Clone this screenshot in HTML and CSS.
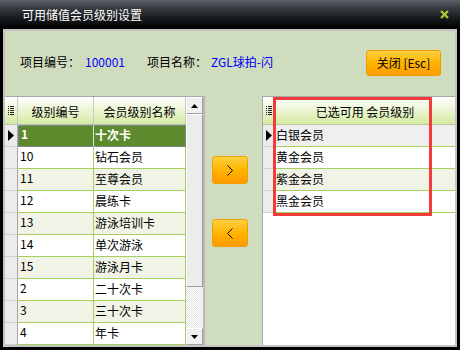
FILE: index.html
```html
<!DOCTYPE html>
<html>
<head>
<meta charset="utf-8">
<link rel="stylesheet" href="styles.css">
</head>
<body>
<div class="window">
  <div class="titlebar">
    <span class="title">可用储值会员级别设置</span>
    <svg class="close" width="9" height="9" viewBox="0 0 9 9"><path d="M1 1L8 8M8 1L1 8" stroke="#a6d02e" stroke-width="2.2"/></svg>
  </div>
  <div class="frame">
    <div class="info">
      <span class="lbl">项目编号：</span><span class="val">100001</span>
      <span class="lbl lbl2">项目名称：</span><span class="val">ZGL球拍-闪</span>
      <button class="btn-close">关闭 [Esc]</button>
    </div>
    <div class="main">
      <div class="lpanel">
        <div class="ltable">
          <div class="hrow">
            <div class="ind hind"><svg width="6" height="9" viewBox="0 0 6 9"><path d="M0 .5h1M2 .5h4M0 2.5h1M2 2.5h4M0 4.5h1M2 4.5h4M0 6.5h1M2 6.5h4M0 8.5h1M2 8.5h4" stroke="#222" stroke-width="1"/></svg></div>
            <div class="hc c1">级别编号</div>
            <div class="hc c2">会员级别名称</div>
          </div>
          <div class="row sel">
            <div class="ind"><svg width="6" height="11" viewBox="0 0 6 11"><path d="M0 0L6 5.5L0 11Z" fill="#000"/></svg></div>
            <div class="cell c1 num">1</div>
            <div class="cell c2">十次卡</div>
          </div>
          <div class="row"><div class="ind"></div><div class="cell c1 num">10</div><div class="cell c2">钻石会员</div></div>
          <div class="row alt"><div class="ind"></div><div class="cell c1 num">11</div><div class="cell c2">至尊会员</div></div>
          <div class="row"><div class="ind"></div><div class="cell c1 num">12</div><div class="cell c2">晨练卡</div></div>
          <div class="row alt"><div class="ind"></div><div class="cell c1 num">13</div><div class="cell c2">游泳培训卡</div></div>
          <div class="row"><div class="ind"></div><div class="cell c1 num">14</div><div class="cell c2">单次游泳</div></div>
          <div class="row alt"><div class="ind"></div><div class="cell c1 num">15</div><div class="cell c2">游泳月卡</div></div>
          <div class="row"><div class="ind"></div><div class="cell c1 num">2</div><div class="cell c2">二十次卡</div></div>
          <div class="row alt"><div class="ind"></div><div class="cell c1 num">3</div><div class="cell c2">三十次卡</div></div>
          <div class="row"><div class="ind"></div><div class="cell c1 num">4</div><div class="cell c2">年卡</div></div>
        </div>
        <div class="vscroll">
          <div class="sbtn"><svg width="7" height="4" viewBox="0 0 7 4"><path d="M0 4L3.5 0L7 4Z" fill="#000"/></svg></div>
          <div class="thumb"></div>
          <div class="track"></div>
          <div class="sbtn"><svg width="7" height="4" viewBox="0 0 7 4"><path d="M0 0L3.5 4L7 0Z" fill="#000"/></svg></div>
        </div>
      </div>
      <div class="mid">
        <button class="arrow"><svg width="6" height="11" viewBox="0 0 6 11"><path d="M0.5 0.5L5.5 5.5L0.5 10.5" fill="none" stroke="#000" stroke-width="1"/></svg></button>
        <button class="arrow"><svg width="6" height="11" viewBox="0 0 6 11"><path d="M5.5 0.5L0.5 5.5L5.5 10.5" fill="none" stroke="#000" stroke-width="1"/></svg></button>
      </div>
      <div class="rpanel">
        <div class="hrow">
          <div class="ind rind hind"><svg width="6" height="9" viewBox="0 0 6 9"><path d="M0 .5h1M2 .5h4M0 2.5h1M2 2.5h4M0 4.5h1M2 4.5h4M0 6.5h1M2 6.5h4M0 8.5h1M2 8.5h4" stroke="#222" stroke-width="1"/></svg></div>
          <div class="hc rc">已选可用 会员级别</div>
        </div>
        <div class="row rsel"><div class="ind rind"><svg width="6" height="11" viewBox="0 0 6 11"><path d="M0 0L6 5.5L0 11Z" fill="#000"/></svg></div><div class="cell rc">白银会员</div></div>
        <div class="row"><div class="ind rind"></div><div class="cell rc">黄金会员</div></div>
        <div class="row alt"><div class="ind rind"></div><div class="cell rc">紫金会员</div></div>
        <div class="row"><div class="ind rind"></div><div class="cell rc">黑金会员</div></div>
        <div class="mark"></div>
      </div>
    </div>
  </div>
</div>
</body>
</html>
```

FILE: styles.css
```css
* { box-sizing: border-box; }
html, body {
  margin: 0;
  padding: 0;
  background: #000;
}
body {
  width: 460px;
  height: 350px;
  overflow: hidden;
  font-family: "Noto Sans CJK SC", "Liberation Sans", sans-serif;
  font-size: 12px;
  color: #000;
}
.window {
  width: 460px;
  height: 350px;
  display: flex;
  flex-direction: column;
  background: #000;
  padding-bottom: 5px;
}
.titlebar {
  height: 29px;
  flex: none;
  display: flex;
  align-items: center;
  justify-content: space-between;
  padding: 0 11px 0 22px;
  background: linear-gradient(to bottom, #5a6068 0%, #3a4046 25%, #15181b 65%, #000 100%);
  color: #fff;
  line-height: 14px;
}
.title { font-size: 12px; letter-spacing: 0; }
.close { display: block; margin-top: -1px; }
.frame {
  flex: 1;
  margin: 0 3px;
  border: 2px solid #c4c4c4;
  background: #d0dcbe;
  display: flex;
  flex-direction: column;
}
.info {
  height: 65px;
  flex: none;
  display: flex;
  align-items: center;
  padding: 0 14px 3px 15px;
  line-height: 14px;
}
.lbl { margin-right: 5px; }
.lbl2 { margin-left: 22px; margin-right: 4px; }
.val { color: #0000ff; }
.btn-close {
  margin-left: auto;
  width: 75px;
  height: 26px;
  margin-top: 2px;
  border: 1px solid #f09a00;
  border-radius: 3px;
  background: linear-gradient(to bottom, #ffd040 0%, #ffb400 50%, #ff9c00 100%);
  font-family: "Noto Sans CJK SC", sans-serif;
  font-size: 12px;
  line-height: 14px;
  padding: 0;
  color: #000;
}
.main {
  flex: 1;
  display: flex;
  min-height: 0;
}
.lpanel {
  width: 200px;
  flex: none;
  display: flex;
  border-top: 1px solid #a8a8a8;
  border-right: 2px solid #b8b8b8;
  background: #fff;
  overflow: hidden;
}
.ltable { width: 181px; flex: none; }
.hrow {
  display: flex;
  height: 28px;
  border-bottom: 1px solid #b8c4a8;
  background: linear-gradient(to bottom, #ffffff 0%, #f1f8e0 35%, #d4eaa2 100%);
}
.row {
  display: flex;
  height: 22px;
  background: #fff;
}
.row.alt { background: #f0f3e6; }
.ind {
  width: 13px;
  flex: none;
  background: #ececec;
  border-right: 1px solid #a4a4a4;
  border-bottom: 1px solid #d0d0d0;
  display: flex;
  align-items: center;
  justify-content: center;
}
.hind { background: transparent; border-bottom: none; border-right: 1px solid #c8c8c8; }
.rind { width: 12px; }
.hc {
  display: flex;
  align-items: center;
  justify-content: center;
  border-right: 1px solid #c8c8c8;
  line-height: 14px;
  padding-top: 2px;
}
.c1 { width: 76px; flex: none; }
.c2 { width: 92px; flex: none; }
.cell {
  border-right: 1px solid #a6cf5e;
  border-bottom: 1px solid #a6cf5e;
  line-height: 14px;
  display: flex;
  align-items: center;
  padding-left: 1px;
  padding-bottom: 2px;
  white-space: nowrap;
  overflow: hidden;
}
.cell.num { padding-left: 2px; padding-bottom: 4px; }
.row.sel .cell {
  background: #5c8a2c;
  color: #fff;
  font-weight: bold;
  border-top: 1px dotted #9a86e0;
  border-bottom: 1px dotted #9a86e0;
}
.row.sel .c1 { border-left: 1px dotted #9a86e0; border-right: 1px solid #d8e8c0; }
.row.sel .c2 { border-right: 1px dotted #9a86e0; }
.row.sel .ind { justify-content: flex-end; padding-right: 3px; }
.vscroll {
  width: 17px;
  flex: none;
  display: flex;
  flex-direction: column;
  background: #f0f0f0;
}
.sbtn {
  height: 17px;
  flex: none;
  background: #f0f0f0;
  border: 1px solid;
  border-color: #fff #a0a0a0 #a0a0a0 #fff;
  display: flex;
  align-items: center;
  justify-content: center;
}
.thumb {
  height: 173px;
  flex: none;
  background: #ececec;
  border: 1px solid;
  border-color: #fff #a0a0a0 #a0a0a0 #fff;
}
.track {
  flex: 1;
  background-color: #fff;
  background-image:
    linear-gradient(45deg, #e4e4e4 25%, transparent 25%, transparent 75%, #e4e4e4 75%),
    linear-gradient(45deg, #e4e4e4 25%, transparent 25%, transparent 75%, #e4e4e4 75%);
  background-size: 2px 2px;
  background-position: 0 0, 1px 1px;
}
.mid {
  width: 57px;
  flex: none;
  display: flex;
  flex-direction: column;
  align-items: flex-start;
  padding: 60px 0 0 7px;
  gap: 35px;
}
.arrow {
  width: 36px;
  height: 28px;
  padding: 0;
  border: 1px solid #f0a000;
  border-radius: 3px;
  background: linear-gradient(to bottom, #ffd040 0%, #ffb400 50%, #ff9a00 100%);
  display: flex;
  align-items: center;
  justify-content: center;
}
.rpanel {
  width: 193px;
  flex: none;
  position: relative;
  background: #fff;
  border-top: 1px solid #a8a8a8;
  border-left: 1px solid #a8a8a8;
}
.rc { width: 180px; flex: none; }
.hc.rc { border-right: none; padding-left: 0; }
.row .rc { border-right: none; }
.row.rsel { background: #efefef; }
.row.rsel .ind { justify-content: flex-end; padding-right: 2px; }
.mark {
  position: absolute;
  left: 10px;
  top: 0;
  width: 159px;
  height: 119px;
  border: 3px solid #f23b3b;
}
```
